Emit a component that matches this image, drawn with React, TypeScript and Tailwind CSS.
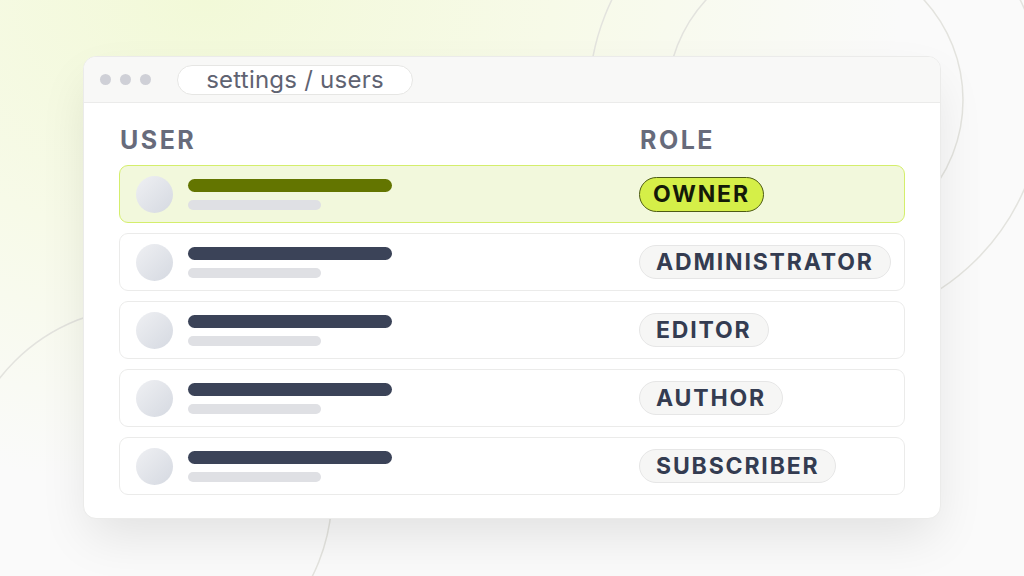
import React from 'react'

type Member = { role: string; owner?: boolean }

const members: Member[] = [
  { role: 'OWNER', owner: true },
  { role: 'ADMINISTRATOR' },
  { role: 'EDITOR' },
  { role: 'AUTHOR' },
  { role: 'SUBSCRIBER' },
]

const Backdrop = () => (
  <svg className="absolute inset-0 h-full w-full" viewBox="0 0 1024 576" fill="none">
    <circle cx="815" cy="100" r="148" stroke="#e3e3de" strokeWidth="1.5" />
    <circle cx="816" cy="99" r="227" stroke="#e3e3de" strokeWidth="1.5" />
    <circle cx="146" cy="493" r="186" stroke="#e3e3de" strokeWidth="1.5" />
  </svg>
)

const RoleBadge = ({ role, owner }: Member) => {
  if (owner) {
    return (
      <span className="inline-flex h-[35px] items-center rounded-full border-[1.5px] border-[#4d5b14] bg-[#d5ef48] px-[13px] text-[23px] font-bold leading-none tracking-[0.08em] text-[#141a08]">
        {role}
      </span>
    )
  }
  return (
    <span className="inline-flex h-[34px] items-center rounded-full border border-[#e6e6e6] bg-[#f6f6f5] px-[16px] text-[23px] font-bold leading-none tracking-[0.08em] text-[#343c51]">
      {role}
    </span>
  )
}

const MemberRow = ({ role, owner }: Member) => (
  <div
    className={
      owner
        ? 'grid h-[58px] grid-cols-[519px_1fr] items-center rounded-[9px] border border-[#d4ee6c] bg-[#f2f8dc]'
        : 'grid h-[58px] grid-cols-[519px_1fr] items-center rounded-[9px] border border-[#ebebea] bg-white'
    }
  >
    <div className="flex items-center pl-4">
      <div className="h-[37px] w-[37px] rounded-full bg-linear-to-br from-[#eff0f3] to-[#d5d9e1]" />
      <div className="ml-[15px] flex flex-col gap-2">
        <div
          className={
            owner
              ? 'h-[13px] w-[204px] rounded-full bg-[#637500]'
              : 'h-[13px] w-[204px] rounded-full bg-[#3b4358]'
          }
        />
        <div className="h-[10px] w-[133px] rounded-full bg-[#dfe0e4]" />
      </div>
    </div>
    <div>
      <RoleBadge role={role} owner={owner} />
    </div>
  </div>
)

export default function App() {
  return (
    <div className="relative h-[576px] w-full overflow-hidden bg-[#fafafa] font-['Inter',sans-serif]">
      <div className="absolute inset-0 bg-[radial-gradient(ellipse_at_20%_0%,#f2f9d8_0%,#f7fae8_30%,transparent_60%)]" />
      <Backdrop />

      <div className="relative pl-[83px] pt-[56px]">
        <div className="h-[463px] w-[858px] overflow-hidden rounded-[13px] border border-[#ebebea] bg-white shadow-[0_22px_50px_-6px_rgba(0,0,0,0.10)]">
          <div className="flex h-[46px] items-center border-b border-[#ebebea] bg-[#f8f8f7] pl-[16px]">
            <div className="flex gap-[9px]">
              <span className="h-[11px] w-[11px] rounded-full bg-[#cfd0d7]" />
              <span className="h-[11px] w-[11px] rounded-full bg-[#cfd0d7]" />
              <span className="h-[11px] w-[11px] rounded-full bg-[#cfd0d7]" />
            </div>
            <div className="ml-[26px] flex h-[30px] w-[236px] items-center justify-center rounded-full border border-[#e6e6e4] bg-white text-[24px] leading-none tracking-[0.01em] text-[#5f6372]">
              settings / users
            </div>
          </div>

          <div className="px-[35px] pt-[22px]">
            <div className="grid grid-cols-[520px_1fr] pl-px text-[25px] font-bold leading-[30px] tracking-[0.1em] text-[#676b7b]">
              <span>USER</span>
              <span>ROLE</span>
            </div>
            <div className="mt-[10px] flex flex-col gap-[10px]">
              {members.map((m) => (
                <MemberRow key={m.role} role={m.role} owner={m.owner} />
              ))}
            </div>
          </div>
        </div>
      </div>
    </div>
  )
}
